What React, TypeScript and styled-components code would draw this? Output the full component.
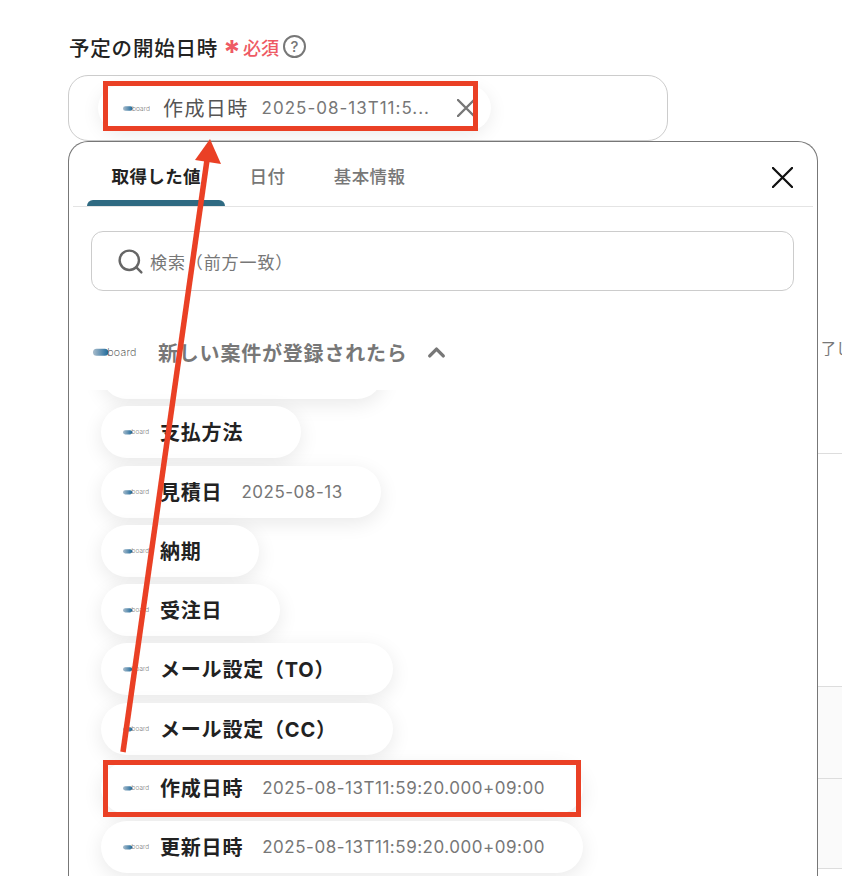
import { ChevronUp, Search } from 'lucide-react';
import styled, { createGlobalStyle } from 'styled-components';

const ACCENT = '#ea4025';
const FONT = `Inter, "Noto Sans CJK JP", sans-serif`;

interface Field {
    name: string;
    value?: string;
    width: number;
}

const FIELDS: Field[] = [
    { name: '支払方法', width: 200 },
    { name: '見積日', value: '2025-08-13', width: 280 },
    { name: '納期', width: 158 },
    { name: '受注日', width: 179 },
    { name: 'メール設定（TO）', width: 292 },
    { name: 'メール設定（CC）', width: 292 },
    { name: '作成日時', value: '2025-08-13T11:59:20.000+09:00', width: 482 },
    { name: '更新日時', value: '2025-08-13T11:59:20.000+09:00', width: 482 },
];

const GlobalStyle = createGlobalStyle`
  html, body {
    margin: 0;
    background: #fff;
    overflow: hidden;
  }
  * {
    box-sizing: border-box;
  }
`;

const BoardLogo = ({ width }: { width: number }) => (
    <LogoSvg width={width} height={width * 0.3} viewBox="0 0 44 13">
        <defs>
            <linearGradient id="boardBlue" x1="0" x2="1" y1="0" y2="0">
                <stop offset="0" stopColor="#a9bccb" />
                <stop offset="1" stopColor="#1f6a9c" />
            </linearGradient>
        </defs>
        <rect x="0" y="3.5" width="15" height="7" rx="3.5" fill="url(#boardBlue)" />
        <text x="14" y="10.5" fontSize="10.5" fontFamily="Inter, sans-serif" fontWeight="200" letterSpacing="0.2" fill="#333">
            board
        </text>
    </LogoSvg>
);

const Chip = ({ name, value, width }: Field) => (
    <ChipRow $width={width}>
        <BoardLogo width={27} />
        <ChipName>{name}</ChipName>
        {value && <ChipValue>{value}</ChipValue>}
    </ChipRow>
);

export default function App() {
    return (
        <Page>
            <GlobalStyle />
            <Main>
                <Label>
                    <LabelText>予定の開始日時</LabelText>
                    <Asterisk>*</Asterisk>
                    <Required>必須</Required>
                    <Help>?</Help>
                </Label>
                <InputBox>
                    <SelectedChip>
                        <BoardLogo width={28} />
                        <SelectedName>作成日時</SelectedName>
                        <SelectedValue>2025-08-13T11:5...</SelectedValue>
                        <CrossIcon viewBox="0 0 18 18" $size={18} $color="#777">
                            <path d="M1 1 L17 17 M17 1 L1 17" />
                        </CrossIcon>
                    </SelectedChip>
                </InputBox>
                <Panel>
                    <TabBar>
                        <Tab $active>取得した値</Tab>
                        <Tab>日付</Tab>
                        <Tab>基本情報</Tab>
                        <CloseButton>
                            <CrossIcon viewBox="0 0 22 22" $size={21} $color="#111">
                                <path d="M1 1 L21 21 M21 1 L1 21" />
                            </CrossIcon>
                        </CloseButton>
                    </TabBar>
                    <SearchBox>
                        <Search size={29} strokeWidth={2} color="#666" />
                        <SearchText>検索（前方一致）</SearchText>
                    </SearchBox>
                    <GroupHeader>
                        <BoardLogo width={45} />
                        <GroupTitle>新しい案件が登録されたら</GroupTitle>
                        <ChevronUp size={27} strokeWidth={3} color="#777" />
                    </GroupHeader>
                    <ChipList>
                        <ScrolledChip />
                        {FIELDS.map(field => (
                            <Chip key={field.name} {...field} />
                        ))}
                    </ChipList>
                </Panel>
            </Main>
            <Behind>
                <BehindText>了し</BehindText>
                <BehindRow $height={233} />
                <BehindRow $height={92} $shaded />
                <BehindRow $height={90} $shaded />
            </Behind>
            <Highlight $left={103} $top={81} $width={375} $height={50} />
            <Highlight $left={103} $top={760} $width={478} $height={57} />
            <Arrow viewBox="0 0 842 876">
                <line x1="123" y1="752" x2="207" y2="160" />
                <polygon points="210,139 221,164 195,160" />
            </Arrow>
        </Page>
    );
}

const Page = styled.div`
  position: relative;
  display: flex;
  width: 842px;
  height: 876px;
  overflow: hidden;
  font-family: ${FONT};
  background: #fff;
`;

const Main = styled.div`
  flex: none;
  width: 818px;
  padding: 32px 0 0 68px;
  display: flex;
  flex-direction: column;
`;

const Label = styled.div`
  display: flex;
  align-items: center;
  height: 29px;
  margin: 0 0 14px 0;
`;

const LabelText = styled.span`
  font-size: 20.5px;
  font-weight: 500;
  letter-spacing: 0.8px;
  color: #222;
  margin-left: 1px;
`;

const Asterisk = styled.span`
  margin-left: 5px;
  font-size: 32px;
  font-weight: 700;
  line-height: 1;
  height: 20px;
  color: #ee5a64;
`;

const Required = styled.span`
  margin-left: 2px;
  font-size: 18px;
  font-weight: 500;
  color: #ee5a64;
`;

const Help = styled.span`
  display: flex;
  align-items: center;
  justify-content: center;
  width: 23px;
  height: 23px;
  margin-left: 4px;
  border: 2px solid #777;
  border-radius: 50%;
  font-size: 15px;
  font-weight: 500;
  color: #777;
`;

const InputBox = styled.div`
  width: 600px;
  height: 66px;
  padding: 9px 0 0 29px;
  border: 1px solid #ccc;
  border-radius: 20px;
`;

const SelectedChip = styled.div`
  display: flex;
  align-items: center;
  width: 393px;
  height: 46px;
  padding-left: 25px;
  border-radius: 23px;
  background: #fff;
  box-shadow: 0 4px 18px rgba(0, 0, 0, 0.08);
`;

const SelectedName = styled.span`
  margin: -2px 0 0 12px;
  font-size: 20px;
  letter-spacing: 1.4px;
  color: #555;
`;

const SelectedValue = styled.span`
  flex: 1;
  margin-left: 13px;
  font-size: 17px;
  letter-spacing: 1px;
  color: #777;
  white-space: nowrap;
`;

const CrossIcon = styled.svg<{ $size: number; $color: string }>`
  flex: none;
  width: ${({ $size }) => $size}px;
  height: ${({ $size }) => $size}px;
  fill: none;
  stroke: ${({ $color }) => $color};
  stroke-width: 2.4;
  margin-right: 16px;

  path {
    stroke-linecap: round;
  }
`;

const Panel = styled.div`
  flex: 1;
  width: 750px;
  margin-top: 0;
  border: 1px solid #777;
  border-bottom: 0;
  border-radius: 20px 20px 0 0;
  background: #fff;
  overflow: hidden;
  display: flex;
  flex-direction: column;
`;

const TabBar = styled.div`
  display: flex;
  align-items: center;
  flex: none;
  height: 65px;
  margin: 0 4px;
  padding-left: 14px;
  border-bottom: 1px solid #e4e4e4;
`;

const Tab = styled.div<{ $active?: boolean }>`
  position: relative;
  height: 100%;
  padding: 21px 24px 0 24.5px;
  font-size: 17.5px;
  font-weight: ${({ $active }) => ($active ? 700 : 500)};
  letter-spacing: 0.4px;
  color: ${({ $active }) => ($active ? '#222' : '#777')};
  white-space: nowrap;

  &::after {
    content: '';
    display: ${({ $active }) => ($active ? 'block' : 'none')};
    position: absolute;
    left: 0;
    right: 0;
    bottom: 0;
    height: 6px;
    border-radius: 6px 6px 0 0;
    background: #2f6a82;
  }
`;

const CloseButton = styled.div`
  display: flex;
  margin: 6px 4px 0 auto;
`;

const SearchBox = styled.div`
  display: flex;
  align-items: center;
  flex: none;
  width: 703px;
  height: 60px;
  margin: 24px 0 0 22px;
  padding-left: 24px;
  border: 1px solid #ccc;
  border-radius: 12px;
`;

const SearchText = styled.span`
  margin-left: 5px;
  font-size: 17px;
  letter-spacing: 0.9px;
  color: #777;
`;

const GroupHeader = styled.div`
  display: flex;
  align-items: center;
  flex: none;
  height: 99px;
  padding: 23px 0 0 24px;
  background: #fff;
  position: relative;
  z-index: 1;
`;

const GroupTitle = styled.span`
  margin: 0 15px 0 20px;
  font-size: 20px;
  font-weight: 700;
  letter-spacing: 0.8px;
  color: #777;
`;

const ChipList = styled.div`
  display: flex;
  flex-direction: column;
  gap: 7.3px;
  flex: 1;
  min-height: 0;
  padding-left: 32px;
`;

const ChipRow = styled.div<{ $width: number }>`
  display: flex;
  align-items: center;
  flex: none;
  width: ${({ $width }) => $width}px;
  height: 52px;
  padding-left: 22px;
  border-radius: 26px;
  background: #fff;
  box-shadow: 0 5px 20px rgba(0, 0, 0, 0.09);
`;

const ScrolledChip = styled(ChipRow).attrs({ $width: 282 })`
  margin-top: -43px;
`;

const LogoSvg = styled.svg`
  flex: none;
  display: block;
`;

const ChipName = styled.span`
  margin: -1px 0 0 10px;
  font-size: 20px;
  font-weight: 700;
  letter-spacing: 0.8px;
  color: #222;
  white-space: nowrap;
`;

const ChipValue = styled.span`
  margin-left: 19px;
  font-size: 17px;
  letter-spacing: 0.52px;
  color: #777;
  white-space: nowrap;
`;

const Behind = styled.div`
  flex: 1;
  min-width: 0;
  padding-top: 338px;
  display: flex;
  flex-direction: column;
  overflow: hidden;
`;

const BehindText = styled.div`
  height: 116px;
  padding-left: 3px;
  font-size: 15px;
  line-height: 22px;
  color: #777;
  white-space: nowrap;
  border-bottom: 1px solid #ddd;
`;

const BehindRow = styled.div<{ $height: number; $shaded?: boolean }>`
  flex: none;
  height: ${({ $height }) => $height}px;
  border-bottom: 1px solid #ddd;
  background: ${({ $shaded }) => ($shaded ? '#fafafa' : '#fff')};
`;

const Highlight = styled.div<{ $left: number; $top: number; $width: number; $height: number }>`
  position: absolute;
  z-index: 2;
  left: ${({ $left }) => $left}px;
  top: ${({ $top }) => $top}px;
  width: ${({ $width }) => $width}px;
  height: ${({ $height }) => $height}px;
  border: 5px solid ${ACCENT};
`;

const Arrow = styled.svg`
  position: absolute;
  z-index: 2;
  left: 0;
  top: 0;
  width: 842px;
  height: 876px;
  pointer-events: none;

  line {
    stroke: ${ACCENT};
    stroke-width: 5.5;
  }

  polygon {
    fill: ${ACCENT};
  }
`;
